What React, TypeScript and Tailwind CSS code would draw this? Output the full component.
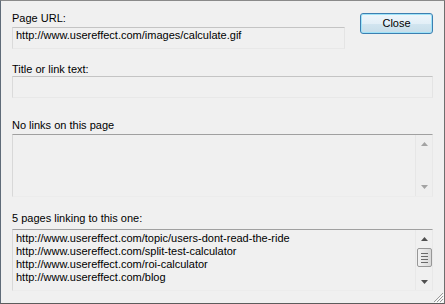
import React from "react";

const font = { fontFamily: '"Liberation Sans", Arial, sans-serif' };

function Arrow({ up, color }: { up: boolean; color: string }) {
  return (
    <svg width="7" height="4" viewBox="0 0 7 4">
      {up ? (
        <polygon points="0,4 7,4 3.5,0" fill={color} />
      ) : (
        <polygon points="0,0 7,0 3.5,4" fill={color} />
      )}
    </svg>
  );
}

function TextBox({ value }: { value?: string }) {
  return (
    <div className="h-[22px] border border-t-[#c4c4c4] border-l-[#dadada] border-r-[#e4e4e4] border-b-[#e8e8e8] bg-[#f0f0f0] pl-[3px] pt-[1px] text-[11px] leading-[13px] text-black whitespace-nowrap overflow-hidden">
      {value}
    </div>
  );
}

export default function App() {
  const links = [
    "http://www.usereffect.com/topic/users-dont-read-the-ride",
    "http://www.usereffect.com/split-test-calculator",
    "http://www.usereffect.com/roi-calculator",
    "http://www.usereffect.com/blog",
  ];
  return (
    <div
      style={font}
      className="relative w-[445px] h-[304px] bg-[#f0f0f0] border border-t-[#8a8a8a] border-l-[#5f6b78] border-r-[#6e6e6e] border-b-[#5c5c5c] pl-[11px] pr-[11px] pt-[11px] text-[11px] leading-[13px] text-black overflow-hidden"
    >
      <div className="flex">
        <div className="w-[333px] flex flex-col">
          <div className="h-[13px]">Page URL:</div>
          <div className="mt-[2px]">
            <TextBox value="http://www.usereffect.com/images/calculate.gif" />
          </div>
        </div>
        <button
          className="ml-[15px] mt-[1px] w-[73px] h-[21px] rounded-[3px] border border-[#3c7fb1] text-[11px] leading-[13px] text-black shadow-[inset_0_0_0_1px_#9fe3f8] bg-[linear-gradient(to_bottom,#eef6fb_0%,#e3eff7_50%,#d2e5f0_51%,#c7dde9_100%)]"
          style={font}
        >
          Close
        </button>
      </div>

      <div className="mt-[14px] h-[13px]">Title or link text:</div>
      <TextBox />

      <div className="mt-[21px] h-[13px]">No links on this page</div>
      <div className="mt-[2px] h-[63px] border border-t-[#a0a0a0] border-l-[#d8d8d8] border-r-[#e8e8e8] border-b-[#ececec] flex">
        <div className="flex-1" />
        <div className="w-[17px] border-l border-l-[#e6e6e6] bg-[#efefef] flex flex-col justify-between items-center py-[7px]">
          <Arrow up color="#a3a3a3" />
          <Arrow up={false} color="#a3a3a3" />
        </div>
      </div>

      <div className="mt-[15px] h-[13px]">5 pages linking to this one:</div>
      <div className="mt-[4px] h-[62px] border border-t-[#a0a0a0] border-l-[#d8d8d8] border-r-[#e8e8e8] border-b-[#ececec] flex">
        <div className="flex-1 pl-[3px] pt-[2px] overflow-hidden whitespace-nowrap">
          {links.map((l) => (
            <div key={l} className="h-[13px]">
              {l}
            </div>
          ))}
        </div>
        <div className="w-[17px] bg-[#f0f0f0] border-l border-l-[#e8e8e8] flex flex-col items-center">
          <div className="h-[17px] flex items-center justify-center">
            <Arrow up color="#505050" />
          </div>
          <div className="mt-[1px] w-[15px] h-[19px] rounded-[2px] border border-[#979797] bg-[linear-gradient(to_right,#f2f2f2,#e6e6e6_50%,#d9d9d9)] flex flex-col items-center justify-center gap-[2px]">
            <div className="w-[7px] h-px bg-[#6a6a6a]" />
            <div className="w-[7px] h-px bg-[#6a6a6a]" />
            <div className="w-[7px] h-px bg-[#6a6a6a]" />
            <div className="w-[7px] h-px bg-[#6a6a6a]" />
          </div>
          <div className="flex-1" />
          <div className="h-[17px] flex items-center justify-center">
            <Arrow up={false} color="#505050" />
          </div>
        </div>
      </div>

      <svg className="absolute right-0 bottom-0" width="12" height="12" viewBox="0 0 12 12">
        <g stroke="#9a9a9a" strokeWidth="1">
          <line x1="11" y1="2" x2="2" y2="11" />
          <line x1="11" y1="5" x2="5" y2="11" />
          <line x1="11" y1="8" x2="8" y2="11" />
        </g>
        <g stroke="#ffffff" strokeWidth="1">
          <line x1="12" y1="3" x2="3" y2="12" />
          <line x1="12" y1="6" x2="6" y2="12" />
          <line x1="12" y1="9" x2="9" y2="12" />
        </g>
      </svg>
    </div>
  );
}
